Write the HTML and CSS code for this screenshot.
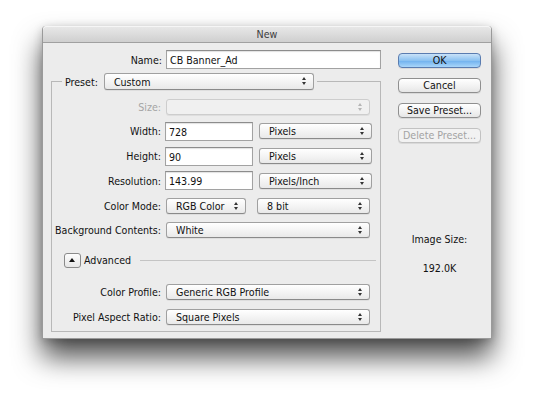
FILE: index.html
```html
<!DOCTYPE html>
<html>
<head>
	<meta charset="utf-8">
	<title>New</title>
	<link rel="stylesheet" href="styles.css">
</head>
<body>
	<div class="window">
		<div class="titlebar">New</div>
		<div class="content">
			<div class="form">
				<div class="row name-row">
					<span class="label">Name:</span>
					<span class="field name-field">CB Banner_Ad</span>
				</div>
				<fieldset class="group">
					<legend>
						<span class="label">Preset:</span>
						<span class="select preset">Custom<span class="arrows"></span></span>
					</legend>
					<div class="row disabled">
						<span class="label">Size:</span>
						<span class="select full"><span class="arrows"></span></span>
					</div>
					<div class="row">
						<span class="label">Width:</span>
						<span class="field num">728</span>
						<span class="select unit">Pixels<span class="arrows"></span></span>
					</div>
					<div class="row">
						<span class="label">Height:</span>
						<span class="field num">90</span>
						<span class="select unit">Pixels<span class="arrows"></span></span>
					</div>
					<div class="row">
						<span class="label">Resolution:</span>
						<span class="field num">143.99</span>
						<span class="select unit">Pixels/Inch<span class="arrows"></span></span>
					</div>
					<div class="row">
						<span class="label">Color Mode:</span>
						<span class="select mode">RGB Color<span class="arrows"></span></span>
						<span class="select unit">8 bit<span class="arrows"></span></span>
					</div>
					<div class="row">
						<span class="label">Background Contents:</span>
						<span class="select full">White<span class="arrows"></span></span>
					</div>
					<div class="advanced">
						<span class="disclosure"></span>
						<span>Advanced</span>
						<span class="rule"></span>
					</div>
					<div class="row">
						<span class="label">Color Profile:</span>
						<span class="select full">Generic RGB Profile<span class="arrows"></span></span>
					</div>
					<div class="row">
						<span class="label">Pixel Aspect Ratio:</span>
						<span class="select full">Square Pixels<span class="arrows"></span></span>
					</div>
				</fieldset>
			</div>
			<div class="side">
				<span class="button default">OK</span>
				<span class="button">Cancel</span>
				<span class="button">Save Preset...</span>
				<span class="button off">Delete Preset...</span>
				<div class="size">
					<div>Image Size:</div>
					<div class="size-value">192.0K</div>
				</div>
			</div>
		</div>
	</div>
</body>
</html>
```

FILE: styles.css
```css
*{
	margin: 0;
	padding: 0;
	box-sizing: border-box;
}
html{
	background: #fff;
}
body{
	min-height: 399px;
	padding: 26px 0 0 42px;
	font-family: "DejaVu Sans Condensed", "DejaVu Sans", sans-serif;
	font-stretch: condensed;
	font-size: 10.6px;
	color: #111;
}
.window{
	width: 450px;
	height: 313px;
	background: #ececec;
	border: 1px solid #9a9a9a;
	border-top: none;
	border-radius: 4px 4px 0 0;
	box-shadow: 0 18px 28px rgba(0,0,0,0.7), 0 2px 10px rgba(0,0,0,0.2);
}
.titlebar{
	height: 17px;
	line-height: 16px;
	text-align: center;
	color: #3c3c3c;
	background: linear-gradient(#e9e9e9, #cfcfcf);
	border-bottom: 1px solid #a0a0a0;
	border-radius: 4px 4px 0 0;
	box-shadow: inset 0 1px 0 #f6f6f6;
}
.content{
	display: flex;
	padding: 7px 0 0 8px;
}
.form{
	width: 330px;
}
.row{
	display: flex;
	align-items: center;
	height: 19px;
	flex-shrink: 0;
}
.label{
	display: flex;
	justify-content: flex-end;
	flex-shrink: 0;
	width: 111px;
	margin-right: 4px;
	white-space: nowrap;
}
.group .label{
	width: 99px;
}
.field{
	height: 19px;
	line-height: 18px;
	background: #fff;
	border: 1px solid #a2a2a2;
	border-top-color: #8c8c8c;
	box-shadow: inset 0 1px 1px rgba(0,0,0,0.12);
	padding-left: 3px;
}
.name-field{
	width: 215px;
}
.num{
	width: 88px;
	margin-right: 5px;
}
.select{
	position: relative;
	height: 16px;
	line-height: 15px;
	margin-left: 1px;
	padding-left: 9px;
	background: linear-gradient(#ffffff, #f3f3f3 55%, #e9e9e9);
	border: 1px solid #a0a0a0;
	border-bottom-color: #8a8a8a;
	border-radius: 3px;
	box-shadow: 0 1px 0 rgba(0,0,0,0.06);
	white-space: nowrap;
}
.arrows{
	position: absolute;
	right: 6px;
	top: 3px;
	width: 5px;
	height: 8px;
}
.arrows::before, .arrows::after{
	content: "";
	position: absolute;
	left: 0;
	border-left: 2.5px solid transparent;
	border-right: 2.5px solid transparent;
}
.arrows::before{
	top: 0;
	border-bottom: 3px solid #333;
}
.arrows::after{
	bottom: 0;
	border-top: 3px solid #333;
}
.preset{
	display: inline-block;
	width: 210px;
	height: 17px;
	line-height: 16px;
	vertical-align: middle;
	margin-left: 3px;
}
.full{
	width: 204px;
}
.unit{
	width: 113px;
}
.mode{
	width: 80px;
	margin-right: 10px;
}
.group{
	margin-top: 4px;
	border: 1px solid #b8b8b8;
	border-radius: 0;
	padding: 7px 0 0 10px;
	height: 259px;
	display: flex;
	flex-direction: column;
	gap: 5.75px;
}
.group legend{
	padding: 0 3px;
	white-space: nowrap;
}
.group legend .label{
	display: inline-block;
	width: auto;
	vertical-align: middle;
	margin-right: 0;
}
.disabled{
	color: #a5a5a5;
}
.disabled .select{
	background: #f0f0f0;
	border-color: #cdcdcd;
}
.disabled .arrows::before{
	border-bottom-color: #b5b5b5;
}
.disabled .arrows::after{
	border-top-color: #b5b5b5;
}
.advanced{
	display: flex;
	align-items: center;
	height: 19px;
	flex-shrink: 0;
	margin-top: 5px;
	padding-left: 2px;
	gap: 3px;
}
.disclosure{
	position: relative;
	width: 17px;
	height: 15px;
	background: linear-gradient(#fdfdfd, #e6e6e6);
	border: 1px solid #8a8a8a;
	border-radius: 3px;
}
.disclosure::after{
	content: "";
	position: absolute;
	left: 4px;
	top: 4px;
	border-left: 3.5px solid transparent;
	border-right: 3.5px solid transparent;
	border-bottom: 4px solid #111;
}
.rule{
	flex: 1;
	height: 1px;
	margin: 0 4px 0 6px;
	background: #c4c4c4;
}
.advanced + .row{
	margin-top: 7px;
}
.side{
	display: flex;
	flex-direction: column;
	margin: 3px 0 0 17px;
	width: 83px;
	gap: 10px;
}
.button{
	height: 15px;
	line-height: 13px;
	text-align: center;
	background: linear-gradient(#ffffff, #f1f1f1 60%, #e6e6e6);
	border: 1px solid #8f8f8f;
	border-radius: 4px;
	box-shadow: 0 1px 0 rgba(0,0,0,0.08);
}
.default{
	background: linear-gradient(#c9e2f8, #8cc2f1 50%, #6eb0ee 51%, #a9d6fa);
	border-color: #5a7cb0;
}
.off{
	color: #a3a3a3;
	border-color: #c2c2c2;
	background: #f2f2f2;
}
.size{
	margin-top: 79px;
	text-align: center;
	line-height: 14px;
}
.size-value{
	margin-top: 15px;
}
```
